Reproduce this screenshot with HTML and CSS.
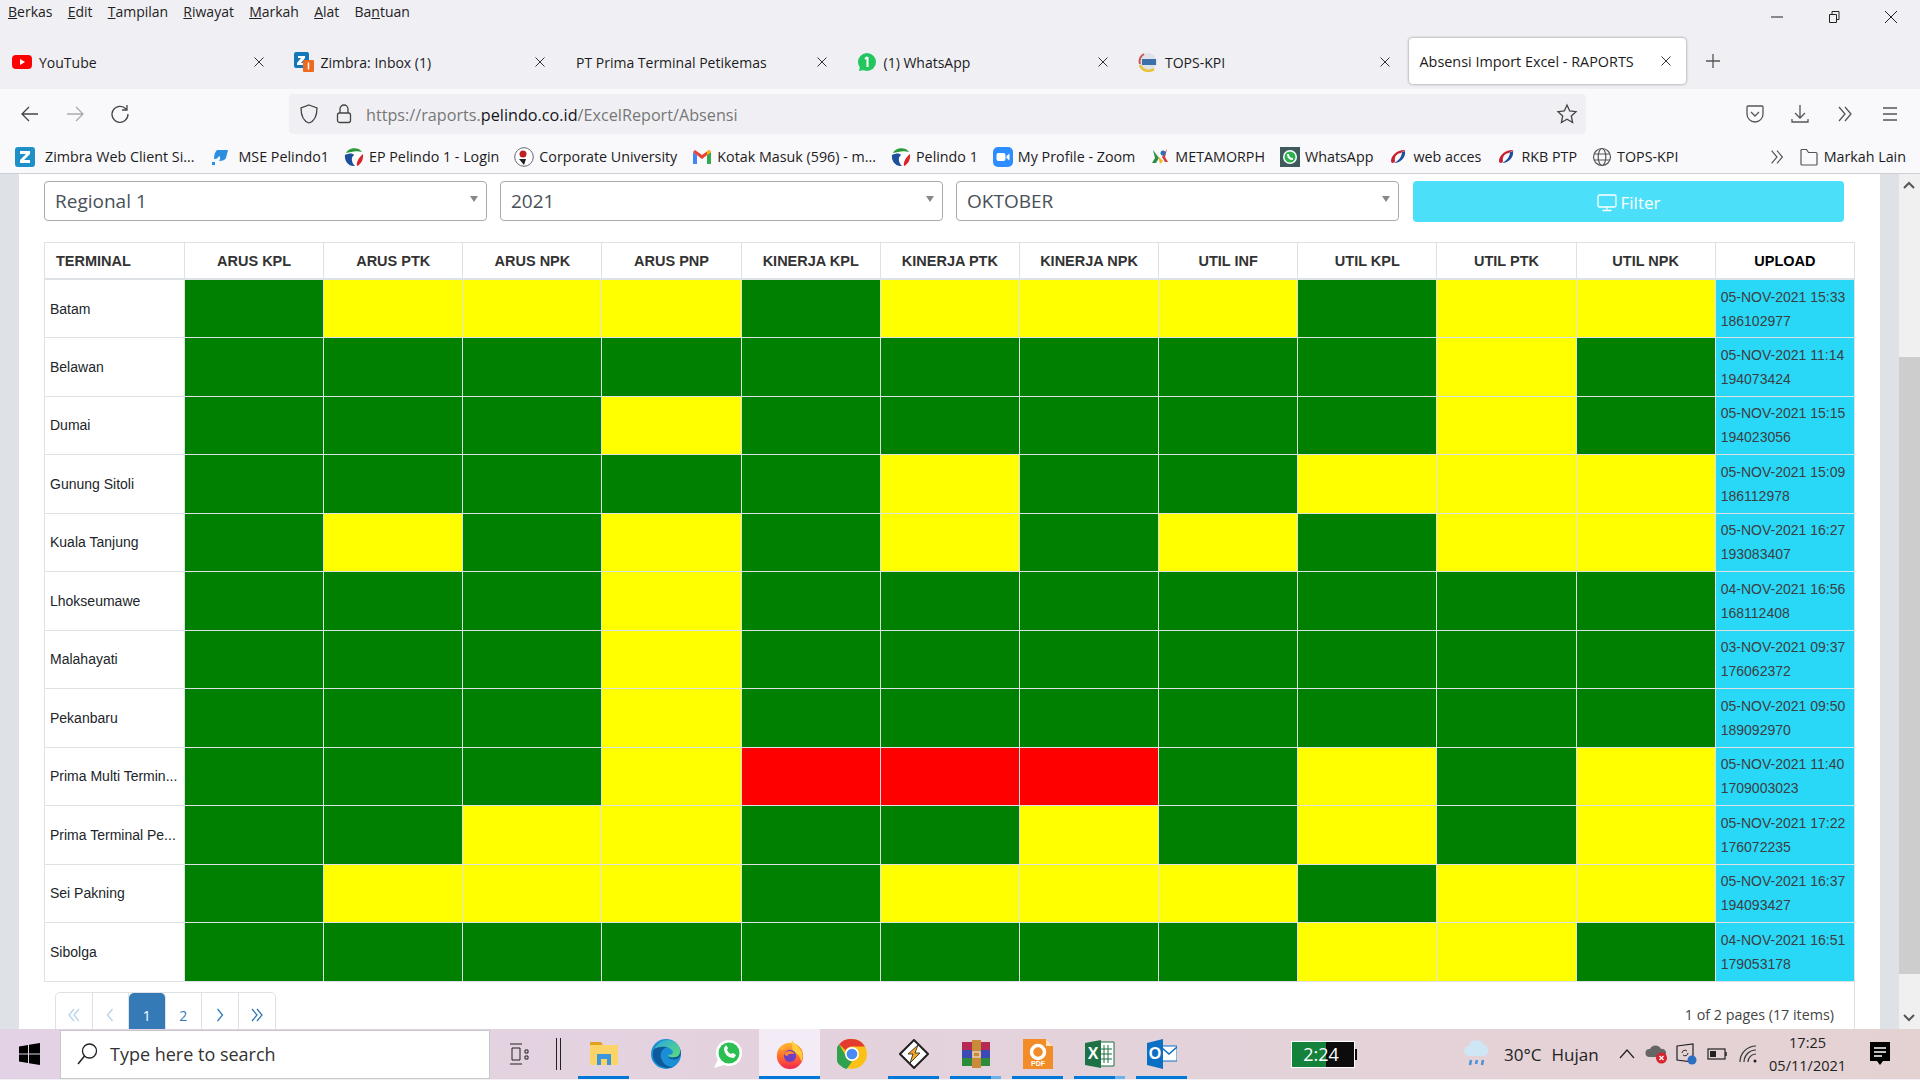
FILE: index.html
```html
<!DOCTYPE html>
<html>
<head>
    <title>Absensi Import Excel - RAPORTS</title>
    <link rel="stylesheet" href="styles.css">
</head>
<body>
<svg class="defs" width="0" height="0">
    <defs>
        <linearGradient id="foxring" x1="0" y1="0" x2="0" y2="1"><stop offset="0" stop-color="#ffb52e"/><stop offset=".55" stop-color="#ff6a2c"/><stop offset="1" stop-color="#f0264f"/></linearGradient>
        <linearGradient id="edgetop" x1="0" y1="0" x2="1" y2="1"><stop offset="0" stop-color="#2aa8de"/><stop offset="1" stop-color="#5fdc78"/></linearGradient>
    </defs>
    <symbol id="x" viewBox="0 0 12 12"><path d="M1.5 1.5l9 9M10.5 1.5l-9 9" stroke="#333" stroke-width="1" fill="none"/></symbol>
    <symbol id="pelindo" viewBox="0 0 20 20"><circle cx="10" cy="10" r="9.5" fill="#fff"/><path d="M2 6C4 1 14-1 18 5 12 3 7 5 2 6z" fill="#2a9a3c"/><path d="M1 8c4-2 8-2 9 0-3 2-3 7 1 11C5 20 0 14 1 8z" fill="#1c4f9c"/><path d="M19 7c1 6-3 11-6 12-1-3 1-8 6-12z" fill="#d8262c"/></symbol>
    <symbol id="swirl" viewBox="0 0 20 20"><path d="M3 14C3 8 10 2 18 3c-3 1-4 2-5 3C9 6 6 10 7 14c0 2-4 3-4 0z" fill="#c8202c"/><path d="M17 4c1 6-4 12-11 12 4-2 8-6 8-11z" fill="#1c4f9c"/></symbol>
</svg>

<div class="menubar">
    <div class="menus">
        <span><u>B</u>erkas</span><span><u>E</u>dit</span><span><u>T</u>ampilan</span><span><u>R</u>iwayat</span><span><u>M</u>arkah</span><span><u>A</u>lat</span><span>Ba<u>n</u>tuan</span>
    </div>
    <div class="winbtns">
        <svg width="14" height="14" viewBox="0 0 14 14"><path d="M1 7h12" stroke="#222"/></svg>
        <svg width="14" height="14" viewBox="0 0 14 14"><path d="M2.5 4.5h7v8h-7zM5 4.5V1.500h7v8h-2.500" stroke="#222" fill="none"/></svg>
        <svg width="14" height="14" viewBox="0 0 14 14"><path d="M1 1l12 12M13 1L1 13" stroke="#222" fill="none"/></svg>
    </div>
</div>

<div class="tabstrip">
    <div class="tab">
        <svg class="fav" viewBox="0 0 20 20"><rect y="3" width="20" height="14" rx="4" fill="#f00"/><path d="M8 7l5 3-5 3z" fill="#fff"/></svg>
        <span class="tabtext">YouTube</span><svg class="close"><use href="#x"/></svg>
    </div>
    <div class="tab">
        <svg class="fav" viewBox="0 0 20 20"><rect width="15" height="16" rx="2" fill="#1477b8"/><path d="M4 4h7v2l-4 5h4v2H3v-2l4-5H4z" fill="#fff"/><rect x="9" y="8" width="11" height="12" rx="1" fill="#ee6a1f"/><path d="M14.500 10.500v7" stroke="#fff" stroke-width="1.500"/></svg>
        <span class="tabtext">Zimbra: Inbox (1)</span><svg class="close"><use href="#x"/></svg>
    </div>
    <div class="tab notfav">
        <span class="tabtext">PT Prima Terminal Petikemas</span><svg class="close"><use href="#x"/></svg>
    </div>
    <div class="tab">
        <svg class="fav" viewBox="0 0 20 20"><circle cx="10" cy="10" r="9" fill="#22c55e"/><path d="M3 14l-1 5 5-1z" fill="#22c55e"/><path d="M10.500 5v10M8 7l2.500-2" stroke="#fff" stroke-width="2" fill="none"/></svg>
        <span class="tabtext">(1) WhatsApp</span><svg class="close"><use href="#x"/></svg>
    </div>
    <div class="tab">
        <svg class="fav" viewBox="0 0 20 20"><circle cx="10" cy="10" r="9" fill="#dfe3e8"/><path d="M2 13a9 9 0 0 0 14 4" stroke="#e8c23a" stroke-width="2.500" fill="none"/><path d="M6 2a9 9 0 0 0-4 10" stroke="#c55" stroke-width="2" fill="none"/><rect x="4" y="7" width="14" height="6" fill="#3d6fa8"/></svg>
        <span class="tabtext">TOPS-KPI</span><svg class="close"><use href="#x"/></svg>
    </div>
    <div class="tab active">
        <span class="tabtext">Absensi Import Excel - RAPORTS</span><svg class="close"><use href="#x"/></svg>
    </div>
    <svg class="newtab" width="16" height="16" viewBox="0 0 16 16"><path d="M8 1v14M1 8h14" stroke="#555" stroke-width="1.300"/></svg>
</div>

<div class="toolbar">
    <div class="navbtns">
        <svg width="20" height="20" viewBox="0 0 20 20"><path d="M18 10H2M9 3l-7 7 7 7" stroke="#444" stroke-width="1.300" fill="none"/></svg>
        <svg width="20" height="20" viewBox="0 0 20 20"><path d="M2 10h16M11 3l7 7-7 7" stroke="#aaa" stroke-width="1.300" fill="none"/></svg>
        <svg width="20" height="20" viewBox="0 0 20 20"><path d="M16 5a8 8 0 1 0 2 5M17 1v5h-5" stroke="#444" stroke-width="1.300" fill="none"/></svg>
    </div>
    <div class="urlbar">
        <svg width="20" height="22" viewBox="0 0 20 22"><path d="M10 2l8 3c0 8-2 13-8 15C4 18 2 13 2 5z" stroke="#444" stroke-width="1.300" fill="none"/></svg>
        <svg class="lock" width="16" height="20" viewBox="0 0 16 20"><path d="M4 9V5a4 4 0 0 1 8 0v4" stroke="#444" stroke-width="1.300" fill="none"/><rect x="1.500" y="9" width="13" height="9.500" rx="2" stroke="#444" stroke-width="1.300" fill="none"/></svg>
        <span class="url">https://raports.<b>pelindo.co.id</b>/ExcelReport/Absensi</span>
        <svg class="star" width="22" height="22" viewBox="0 0 22 22"><path d="M11 2l2.700 6 6.300.7-4.700 4.300 1.300 6.500L11 16.300 5.400 19.500 6.700 13 2 8.700 8.300 8z" stroke="#444" stroke-width="1.300" fill="none"/></svg>
    </div>
    <div class="toolbtns">
        <svg width="20" height="20" viewBox="0 0 20 20"><path d="M3 2h14a1 1 0 0 1 1 1v7a8 8 0 0 1-16 0V3a1 1 0 0 1 1-1z" stroke="#555" stroke-width="1.300" fill="none"/><path d="M6 8l4 4 4-4" stroke="#555" stroke-width="1.300" fill="none"/></svg>
        <svg width="20" height="20" viewBox="0 0 20 20"><path d="M10 1v13M5 9l5 5 5-5M2 15v3h16v-3" stroke="#555" stroke-width="1.300" fill="none"/></svg>
        <svg width="20" height="20" viewBox="0 0 20 20"><path d="M4 3l6 7-6 7M10 3l6 7-6 7" stroke="#555" stroke-width="1.300" fill="none"/></svg>
        <svg width="20" height="20" viewBox="0 0 20 20"><path d="M3 4h14M3 10h14M3 16h14" stroke="#555" stroke-width="1.300"/></svg>
    </div>
</div>

<div class="bookmarks">
    <div class="bm zim"><svg viewBox="0 0 20 20"><rect width="20" height="20" rx="3" fill="#1f8fc7"/><path d="M5 4h10v3l-6 6h6v3H5v-3l6-6H5z" fill="#fff"/></svg>Zimbra Web Client Si...</div>
    <div class="bm mse"><svg viewBox="0 0 20 20"><path d="M7 3h11l-2 8c-1 2-3 3-7 3 1-1 2-4 0-5-1 2-2 3-5 3 0-4 1-7 3-9z" fill="#2a8fe0"/><rect x="2" y="15" width="3" height="3" fill="#2a8fe0"/></svg>MSE Pelindo1</div>
    <div class="bm"><svg><use href="#pelindo"/></svg>EP Pelindo 1 - Login</div>
    <div class="bm"><svg viewBox="0 0 20 20"><circle cx="10" cy="10" r="9.300" fill="#fff" stroke="#667"/><circle cx="9" cy="7" r="3.500" fill="#b22"/><path d="M5 12l5 6 2-6z" fill="#222"/></svg>Corporate University</div>
    <div class="bm"><svg viewBox="0 0 20 20"><path d="M1 5v12h4V8z" fill="#4285f4"/><path d="M15 8v9h4V5z" fill="#34a853"/><path d="M1 5l9 7 9-7-2-2-7 5-7-5z" fill="#ea4335"/><path d="M15 8l4-3-2-2-2 1.500z" fill="#fbbc04"/></svg>Kotak Masuk (596) - m...</div>
    <div class="bm"><svg><use href="#pelindo"/></svg>Pelindo 1</div>
    <div class="bm"><svg viewBox="0 0 20 20"><rect width="20" height="20" rx="5" fill="#2d8cff"/><rect x="3.500" y="6" width="9" height="8" rx="2" fill="#fff"/><path d="M13.500 9l3-2.500v7l-3-2.500z" fill="#fff"/></svg>My Profile - Zoom</div>
    <div class="bm"><svg viewBox="0 0 20 20"><path d="M3 3l6 8-3 5H2l3-5z" fill="#2c8c4c"/><path d="M17 2l-5 8 3 5h3l-3-5z" fill="#d83a34"/><circle cx="13" cy="6" r="2.500" fill="#2b6fc0"/><path d="M8 9l5 5-3 3z" fill="#e8b72c"/></svg>METAMORPH</div>
    <div class="bm"><svg viewBox="0 0 20 20"><rect width="20" height="20" fill="#3f5a5c"/><circle cx="10" cy="10" r="7" fill="#fff"/><circle cx="10" cy="10" r="5.500" fill="#2bb24c"/><path d="M8 7c0 3 2 5 5 5" stroke="#fff" stroke-width="2" fill="none"/></svg>WhatsApp</div>
    <div class="bm"><svg><use href="#swirl"/></svg>web acces</div>
    <div class="bm"><svg><use href="#swirl"/></svg>RKB PTP</div>
    <div class="bm"><svg viewBox="0 0 20 20"><circle cx="10" cy="10" r="8.500" fill="none" stroke="#555" stroke-width="1.200"/><ellipse cx="10" cy="10" rx="3.800" ry="8.500" fill="none" stroke="#555" stroke-width="1.200"/><path d="M2 7h16M2 13h16" stroke="#555" stroke-width="1.200"/></svg>TOPS-KPI</div>
    <svg class="bmmore" width="18" height="18" viewBox="0 0 20 20"><path d="M4 3l6 7-6 7M10 3l6 7-6 7" stroke="#555" stroke-width="1.300" fill="none"/></svg>
    <div class="bm last"><svg viewBox="0 0 20 20"><path d="M2 17V3.500a1 1 0 0 1 1-1h4.500l2 3H17a1 1 0 0 1 1 1V17a1 1 0 0 1-1 1H3a1 1 0 0 1-1-1z" fill="none" stroke="#555" stroke-width="1.200"/></svg>Markah Lain</div>
</div>

<div class="viewport">
    <div class="gutter"></div>
    <div class="page">
        <div class="filters">
            <div class="select">Regional 1</div>
            <div class="select">2021</div>
            <div class="select">OKTOBER</div>
            <button class="filterbtn">
                <svg width="20" height="18" viewBox="0 0 20 18"><rect x="1" y="1" width="18" height="12" rx="1.500" fill="none" stroke="#fff" stroke-width="1.300"/><path d="M10 13v3M5.500 16.500h9" stroke="#fff" stroke-width="1.300"/></svg>
                Filter
            </button>
        </div>
        <div class="gridbox">
            <table class="grid">
                <thead id="head"></thead>
                <tbody id="rows"></tbody>
            </table>
            <div class="pager">
                <div class="pages">
                    <span class="pg faded"><svg width="14" height="14" viewBox="0 0 14 14"><path d="M7 1L2 7l5 6M12 1L7 7l5 6" fill="none" stroke="currentColor" stroke-width="1.300"/></svg></span>
                    <span class="pg faded"><svg width="14" height="14" viewBox="0 0 14 14"><path d="M9.500 1L4.500 7l5 6" fill="none" stroke="currentColor" stroke-width="1.300"/></svg></span>
                    <span class="pg on">1</span>
                    <span class="pg">2</span>
                    <span class="pg"><svg width="14" height="14" viewBox="0 0 14 14"><path d="M4.500 1l5 6-5 6" fill="none" stroke="currentColor" stroke-width="1.300"/></svg></span>
                    <span class="pg"><svg width="14" height="14" viewBox="0 0 14 14"><path d="M2 1l5 6-5 6M7 1l5 6-5 6" fill="none" stroke="currentColor" stroke-width="1.300"/></svg></span>
                </div>
                <span class="pageinfo">1 of 2 pages (17 items)</span>
            </div>
        </div>
    </div>
    <div class="gutter"></div>
    <div class="scrollbar">
        <svg class="up" width="14" height="10" viewBox="0 0 14 10"><path d="M2 8l5-5 5 5" stroke="#555" stroke-width="2" fill="none"/></svg>
        <div class="thumb"></div>
        <svg class="down" width="14" height="10" viewBox="0 0 14 10"><path d="M2 2l5 5 5-5" stroke="#555" stroke-width="2" fill="none"/></svg>
    </div>
</div>

<div class="taskbar">
    <svg class="winlogo" width="21" height="22" viewBox="0 0 21 22"><path d="M0 3.500l9-1.500v8.500H0zM10 1.800L21 0v10.500H10zM0 11.500h9V20l-9-1.500zM10 11.500h11V22l-11-1.800z" fill="#000"/></svg>
    <div class="searchbox">
        <svg width="24" height="24" viewBox="0 0 24 24"><circle cx="14.500" cy="9" r="7" fill="none" stroke="#222" stroke-width="1.300"/><path d="M9.500 14L3 22" stroke="#222" stroke-width="1.500"/></svg>
        <span>Type here to search</span>
    </div>
    <svg class="taskview" width="20" height="24" viewBox="0 0 20 24"><path d="M1 2h12M1 22h12M3 6h8v12H3zM16 8h3v3h-3zM16 14h3v3h-3z" stroke="#222" fill="none"/></svg>
    <div class="sep"></div>
    <div class="apps">
        <div class="app run"><svg viewBox="0 0 30 26"><path d="M1 1h11l2 3h-13z" fill="#e0a020"/><path d="M1 4h28v20H1z" fill="#fbd468"/><path d="M8 24V13h14v11h-4v-6h-6v6z" fill="#3a96dd"/></svg></div>
        <div class="app"><svg viewBox="0 0 30 30"><circle cx="15" cy="15" r="15" fill="#1b8fd6"/><path d="M3 10C6 1 22-2 29 10c2 5 0 9-3 10-3 1-8 0-9-2 5 0 7-2 7-4 0-5-6-7-10-5-4 2-5 7-4 10 2 6 6 9 12 9C10 32-2 22 3 10z" fill="#0c5a9c"/><path d="M3 10C8-1 25-3 29 10c1 5-2 8-5 8-3 1-7 0-7-2 3 0 5-1 5-3-2-5-11-7-19-3z" fill="url(#edgetop)"/></svg></div>
        <div class="app"><svg viewBox="0 0 30 30"><circle cx="16" cy="14" r="13" fill="#fff"/><path d="M1 29l4-9 6 6z" fill="#fff"/><circle cx="16" cy="14" r="10.500" fill="#2bbf52"/><path d="M11 9c0 6 4 10 10 10l2-3-3-2-2 1c-2-1-3-2-4-4l1-2-2-3z" fill="#fff"/></svg></div>
        <div class="app on run"><svg viewBox="0 0 30 32"><circle cx="15" cy="18" r="14" fill="url(#foxring)"/><path d="M17 1c2 4 8 7 11 14 1 4 0 7-1 9-1-5-4-9-9-11-1-4-1-8-1-12z" fill="#ffcf3a"/><path d="M4 11c1-2 3-4 5-5-1 2 0 3 2 3-3 2-5 4-7 2z" fill="#ffb02e"/><circle cx="15" cy="18" r="6.500" fill="#6f3fc4"/><path d="M9 15c3-3 9-3 11 1-4-1-7 0-8 2-2 0-3-1-3-3z" fill="#ff8a2c"/></svg></div>
        <div class="app"><svg viewBox="0 0 28 28"><circle cx="14" cy="14" r="14" fill="#fbc116"/><path d="M14 0a14 14 0 0 1 12.100 7H14a7 7 0 0 0-6.100 3.500L2 5A14 14 0 0 1 14 0z" fill="#e33b2e"/><path d="M2 5l6 10.500A7 7 0 0 0 14 21l-5 7A14 14 0 0 1 2 5z" fill="#2fa24f"/><circle cx="14" cy="14" r="6.500" fill="#fff"/><circle cx="14" cy="14" r="5" fill="#4a8af4"/></svg></div>
        <div class="app run"><svg viewBox="0 0 30 30"><path d="M15 1l14 14-14 14L1 15z" fill="#fff" stroke="#222" stroke-width="2"/><path d="M19 6L9 15h5l-3 9 10-10h-5z" fill="#f5a623" stroke="#222" stroke-width=".8"/></svg></div>
        <div class="app run more"><svg viewBox="0 0 30 30"><rect x="1" y="3" width="28" height="8" fill="#b42a55"/><rect x="1" y="11" width="28" height="8" fill="#3d4ab5"/><rect x="1" y="19" width="28" height="8" fill="#2c8c3c"/><path d="M11 1h9v28h-9z" fill="#c98a3a"/><rect x="12" y="13" width="7" height="5" fill="none" stroke="#eee"/></svg></div>
        <div class="app run"><svg viewBox="0 0 30 30"><path d="M0 0h23l7 7v23H0z" fill="#f28c28"/><path d="M23 0l7 7h-7z" fill="#fde3c4"/><circle cx="15" cy="13" r="6.500" fill="none" stroke="#fff" stroke-width="3.500"/><text x="15" y="27" class="pdf">PDF</text></svg></div>
        <div class="app run more"><svg viewBox="0 0 30 30"><path d="M10 3h19v24H10z" fill="#fff" stroke="#1e7145"/><path d="M19 6v18M23 6v18M13 10h14M13 15h14M13 20h14" stroke="#1e7145"/><path d="M0 4l16-3v28L0 26z" fill="#1e7145"/><text x="8" y="20" class="xl">X</text></svg></div>
        <div class="app run"><svg viewBox="0 0 30 30"><path d="M14 7h16v15H14z" fill="#fff" stroke="#0b6fc4"/><path d="M14 8l8 7 8-7" fill="none" stroke="#0b6fc4" stroke-width="1.500"/><path d="M0 4l16-4v30L0 26z" fill="#0b6fc4"/><text x="8" y="20" class="xl">O</text></svg></div>
    </div>
    <div class="batwidget"><span class="batfill"></span><span class="battext">2:24</span></div>
    <div class="tray">
        <svg class="rain" width="28" height="32" viewBox="0 0 28 32"><path d="M6 18a5 5 0 0 1 0-10 8 8 0 0 1 15-1 6 6 0 0 1 1 11z" fill="#cfe6f7"/><path d="M8 22l-1 5M14 22l-1 4M20 22l-1 5" stroke="#4a93d6" stroke-width="2.500"/></svg>
        <span class="temp">30°C</span><span class="hujan">Hujan</span>
        <svg class="chev" width="16" height="12" viewBox="0 0 16 12"><path d="M1 10l7-8 7 8" stroke="#222" stroke-width="1.200" fill="none"/></svg>
        <svg class="trayic" width="24" height="24" viewBox="0 0 24 24"><path d="M4 15a4 4 0 0 1 1-8 6 6 0 0 1 11 0 4 4 0 0 1 2 8z" fill="#666"/><circle cx="16.500" cy="16" r="5.500" fill="#d9232e"/><path d="M14.500 14l4 4M18.500 14l-4 4" stroke="#fff" stroke-width="1.300"/></svg>
        <svg class="trayic" width="24" height="24" viewBox="0 0 24 24"><path d="M2 4l16-2v18L2 18z" fill="none" stroke="#222" stroke-width="1.200"/><path d="M7 11a3 3 0 0 1 5-2M13 11a3 3 0 0 1-5 2" stroke="#222" fill="none"/><circle cx="17" cy="18" r="4.500" fill="#2a6fc0"/></svg>
        <svg class="trayic" width="24" height="24" viewBox="0 0 24 24"><rect x="3" y="7" width="17" height="10" fill="none" stroke="#222" stroke-width="1.200"/><rect x="5" y="9" width="6" height="6" fill="#222"/><path d="M21 10v4" stroke="#222" stroke-width="1.500"/></svg>
        <svg class="trayic wifi" width="24" height="24" viewBox="0 0 24 24"><path d="M3 20A16 16 0 0 1 19 4M7 20A12 12 0 0 1 19 8M11 20a8 8 0 0 1 8-8" stroke="#333" stroke-width="1.200" fill="none"/><circle cx="18" cy="19" r="1.500" fill="#222"/></svg>
        <div class="clock"><span>17:25</span><span>05/11/2021</span></div>
        <svg class="notif" width="20" height="24" viewBox="0 0 20 24"><path d="M0 0h20v19h-7l-3 4-3-4H0z" fill="#000"/><path d="M4 6h12M4 10h12M4 14h8" stroke="#fff" stroke-width="1.300"/></svg>
    </div>
</div>

<script>
    // g = green, y = yellow, r = red
    var cols = ["ARUS KPL","ARUS PTK","ARUS NPK","ARUS PNP","KINERJA KPL","KINERJA PTK","KINERJA NPK","UTIL INF","UTIL KPL","UTIL PTK","UTIL NPK"];
    var data = [
        ["Batam","gyyygyyygyy","05-NOV-2021 15:33","186102977"],
        ["Belawan","gggggggggyg","05-NOV-2021 11:14","194073424"],
        ["Dumai","gggygggggyg","05-NOV-2021 15:15","194023056"],
        ["Gunung Sitoli","gggggyggyyy","05-NOV-2021 15:09","186112978"],
        ["Kuala Tanjung","gygygygygyy","05-NOV-2021 16:27","193083407"],
        ["Lhokseumawe","gggyggggggg","04-NOV-2021 16:56","168112408"],
        ["Malahayati","gggyggggggg","03-NOV-2021 09:37","176062372"],
        ["Pekanbaru","gggyggggggg","05-NOV-2021 09:50","189092970"],
        ["Prima Multi Termin...","gggyrrrgygy","05-NOV-2021 11:40","1709003023"],
        ["Prima Terminal Pe...","ggyyggygygy","05-NOV-2021 17:22","176072235"],
        ["Sei Pakning","gyyygyyygyy","05-NOV-2021 16:37","194093427"],
        ["Sibolga","ggggggggyyg","04-NOV-2021 16:51","179053178"]
    ];

    var h = '<tr><th class="first">TERMINAL</th>';
    for (var i = 0; i < cols.length; i++) {
        h += '<th>' + cols[i] + '</th>';
    }
    h += '<th class="upl">UPLOAD</th></tr>';
    document.getElementById("head").innerHTML = h;

    var b = '';
    for (var r = 0; r < data.length; r++) {
        b += '<tr><td class="name">' + data[r][0] + '</td>';
        for (var c = 0; c < data[r][1].length; c++) {
            b += '<td class="' + data[r][1][c] + '"></td>';
        }
        b += '<td class="upload">' + data[r][2] + '<br>' + data[r][3] + '</td></tr>';
    }
    document.getElementById("rows").innerHTML = b;
</script>
</body>
</html>
```
FILE: styles.css
```css
html, body {
    margin: 0;
    padding: 0;
    height: 100%;
    overflow: hidden;
}
body {
    width: 1920px;
    height: 1080px;
    display: flex;
    flex-direction: column;
    font-family: "Open Sans", "Noto Sans", sans-serif;
    font-size: 14px;
    color: #1c1b22;
    background-color: #f0f0f4;
}
.defs {
    position: absolute;
}

/* browser window */
.menubar {
    height: 38px;
    flex: none;
    display: flex;
    justify-content: space-between;
    background-color: #f0f0f4;
}
.menus {
    display: flex;
    gap: 15.200px;
    padding: 3px 0 0 8px;
    font-size: 14px;
    line-height: 18px;
    color: #222;
}
.winbtns {
    display: flex;
    gap: 43px;
    padding: 10px 22px 0 0;
}
.tabstrip {
    height: 51px;
    flex: none;
    display: flex;
    align-items: flex-start;
    padding-left: 9px;
    background-color: #f0f0f4;
}
.tab {
    width: 281.500px;
    height: 48px;
    flex: none;
    box-sizing: border-box;
    display: flex;
    align-items: center;
    padding: 0 3px;
}
.tab.notfav {
    padding-left: 4px;
}
.tab .fav {
    width: 20px;
    height: 20px;
    margin-right: 7px;
}
.tabtext {
    flex: 1;
    font-size: 14px;
    white-space: nowrap;
}
.tab .close {
    width: 12px;
    height: 12px;
    margin-right: 23px;
}
.tab.active {
    width: 277px;
    height: 46px;
    margin-left: -8px;
    padding: 0 14px 0 11px;
    background-color: #fff;
    border-radius: 4px;
    box-shadow: 0 0 3px rgba(0,0,0,.45);
}
.tab.active .tabtext {
    font-size: 14.400px;
}
.tab.active .close {
    margin-right: 0;
}
.newtab {
    margin: 15px 0 0 19px;
}
.toolbar {
    height: 47px;
    flex: none;
    box-sizing: border-box;
    display: flex;
    align-items: center;
    padding-top: 3px;
    background-color: #f9f9fb;
}
.navbtns {
    width: 289px;
    flex: none;
    box-sizing: border-box;
    display: flex;
    gap: 25px;
    padding-left: 20px;
}
.urlbar {
    width: 1297px;
    height: 40px;
    flex: none;
    box-sizing: border-box;
    display: flex;
    align-items: center;
    padding: 0 8px 0 10px;
    background-color: #f0f0f4;
    border-radius: 4px;
}
.urlbar .lock {
    margin-left: 17px;
}
.url {
    flex: 1;
    margin-left: 14px;
    padding-top: 2px;
    font-size: 16.200px;
    color: #777;
}
.url b {
    font-weight: 400;
    color: #15141a;
}
.toolbtns {
    display: flex;
    gap: 25px;
    margin-left: 159px;
}
.bookmarks {
    height: 38px;
    flex: none;
    box-sizing: border-box;
    display: flex;
    align-items: center;
    padding: 4px 0 0 15px;
    background-color: #f9f9fb;
    border-bottom: 1px solid #cfcfd8;
    white-space: nowrap;
    font-size: 14.300px;
    gap: 15px;
}
.bm {
    display: flex;
    align-items: center;
    gap: 5px;
}
.bm.zim {
    gap: 10px;
}
.bm.mse {
    gap: 9px;
}
.bm svg {
    width: 20px;
    height: 20px;
    flex: none;
}
.bmmore {
    margin-left: auto;
}
.bm.last {
    margin-right: 14px;
    margin-left: -2px;
}

/* page */
.viewport {
    height: 855px;
    flex: none;
    display: flex;
    background-color: #fff;
}
.gutter {
    width: 19px;
    flex: none;
    background-color: #dee2e6;
}
.page {
    width: 1861px;
    flex: none;
    box-sizing: border-box;
    padding: 7px 0 0 25px;
    overflow: hidden;
    background-color: #fff;
}
.scrollbar {
    position: relative;
    width: 21px;
    flex: none;
    background-color: #f0f0f0;
}
.scrollbar .up {
    position: absolute;
    top: 6px;
    left: 3px;
}
.scrollbar .down {
    position: absolute;
    bottom: 6px;
    left: 3px;
}
.thumb {
    position: absolute;
    top: 183px;
    left: 0;
    width: 21px;
    height: 617px;
    background-color: #cdcdcd;
}
.filters {
    display: flex;
    width: 1810px;
    gap: 13px;
    margin-bottom: 20px;
}
.select {
    position: relative;
    width: 443px;
    height: 40px;
    flex: none;
    box-sizing: border-box;
    padding: 0 10px;
    border: 1px solid #aaa;
    border-radius: 4px;
    font-size: 19px;
    line-height: 38px;
    color: #495057;
}
.select::after {
    content: "";
    position: absolute;
    right: 8px;
    top: 14px;
    border-left: 4.500px solid transparent;
    border-right: 4.500px solid transparent;
    border-top: 6px solid #888;
}
.filterbtn {
    width: 431px;
    height: 41px;
    flex: none;
    margin-left: 1px;
    padding: 2px 0 0;
    border: none;
    border-radius: 4px;
    background-color: #4cdff9;
    color: #fff;
    font-family: inherit;
    font-size: 17px;
    display: flex;
    align-items: center;
    justify-content: center;
    gap: 4px;
}
.gridbox {
    width: 1811px;
    height: 800px;
    box-sizing: border-box;
    border-right: 1px solid #dee2e6;
}
.grid {
    width: 1811px;
    table-layout: fixed;
    border-collapse: collapse;
    font-family: "Liberation Sans", Arial, sans-serif;
    font-size: 14px;
    color: #212529;
}
.grid th {
    height: 35px;
    padding: 0;
    border: 1px solid #dee2e6;
    border-bottom: 2px solid #dee2e6;
    font-size: 14.500px;
    font-weight: 700;
    color: #333;
    text-align: center;
}
.grid th.first {
    width: 140px;
    box-sizing: border-box;
    text-align: left;
    padding-left: 11px;
}
.grid th.upl {
    color: #000;
}
.grid td {
    height: 58.500px;
    box-sizing: border-box;
    padding: 0;
    border: 1px solid #dee2e6;
}
.grid td.name {
    padding-left: 5px;
    white-space: nowrap;
    background-color: #fff;
}
.grid td.g {
    background-color: #008000;
}
.grid td.y {
    background-color: #ffff00;
}
.grid td.r {
    background-color: #ff0000;
}
.grid td.upload {
    padding-left: 5px;
    background-color: #29d8f6;
    line-height: 24px;
    color: #3a3f44;
    white-space: nowrap;
}
.pager {
    display: flex;
    justify-content: space-between;
    padding: 10px 20px 0 11px;
}
.pages {
    display: flex;
    height: 60px;
    border: 1px solid #dee2e6;
    border-radius: 5px 5px 0 0;
}
.pg {
    width: 36.500px;
    box-sizing: border-box;
    padding-top: 13px;
    text-align: center;
    font-size: 14px;
    color: #337ab7;
    border-right: 1px solid #dee2e6;
}
.pg:last-child {
    border-right: none;
}
.pg svg {
    display: inline-block;
    margin-top: 2px;
}
.pg.faded {
    color: #b7d2e8;
}
.pg.on {
    background-color: #337ab7;
    color: #fff;
    border-radius: 5px 5px 0 0;
}
.pageinfo {
    padding-top: 13px;
    font-size: 14.300px;
    color: #444;
}

/* taskbar */
.taskbar {
    position: relative;
    height: 50px;
    flex: none;
    display: flex;
    align-items: center;
    background: linear-gradient(90deg, #e3d2e5, #e4d2d3);
}
.winlogo {
    margin-left: 19px;
    margin-right: 20px;
}
.searchbox {
    width: 430px;
    height: 49px;
    flex: none;
    box-sizing: border-box;
    display: flex;
    align-items: center;
    padding-left: 14px;
    gap: 11px;
    background-color: #fff;
    border: 1px solid #c8c8c8;
    font-size: 18px;
    color: #333;
}
.taskview {
    margin-left: 19px;
}
.sep {
    width: 3px;
    height: 32px;
    margin-left: 27px;
    border-left: 1px solid #222;
    border-right: 1px solid #222;
}
.apps {
    display: flex;
    height: 50px;
    margin-left: 17px;
}
.app {
    position: relative;
    width: 51px;
    height: 50px;
    margin-right: 11px;
    display: flex;
    align-items: center;
    justify-content: center;
}
.app svg {
    width: 30px;
    height: 30px;
}
.app.on {
    width: 61px;
    margin: 0 6px 0 -5px;
    background-color: #f3ebf5;
}
.app.run::after {
    content: "";
    position: absolute;
    left: 0;
    right: 0;
    bottom: 0;
    height: 3px;
    background-color: #0078d7;
}
.app.more::before {
    content: "";
    position: absolute;
    z-index: 1;
    right: 0;
    bottom: 0;
    width: 10px;
    height: 3px;
    background-color: #6cb1ea;
}
.pdf {
    font: 700 7px "Liberation Sans", sans-serif;
    fill: #fff;
    text-anchor: middle;
}
.xl {
    font: 700 16px "Liberation Sans", sans-serif;
    fill: #fff;
    text-anchor: middle;
}
.batwidget {
    position: absolute;
    left: 1291px;
    top: 12px;
    width: 64px;
    height: 27px;
    box-sizing: border-box;
    border: 1px solid #fff;
    background-color: #0c0c0c;
    color: #fff;
    text-align: center;
    font-size: 18px;
    line-height: 25px;
}
.batwidget::after {
    content: "";
    position: absolute;
    right: -3px;
    top: 7px;
    width: 2px;
    height: 11px;
    background-color: #0c0c0c;
}
.batfill {
    position: absolute;
    left: 0;
    top: 0;
    bottom: 0;
    width: 34px;
    background-color: #14823a;
}
.battext {
    position: relative;
    margin-left: -4px;
}
.tray {
    position: absolute;
    left: 1463px;
    top: 0;
    right: 0;
    height: 50px;
    display: flex;
    align-items: center;
    color: #222;
}
.temp {
    margin-left: 13px;
    font-size: 17px;
}
.hujan {
    margin-left: 10px;
    font-size: 17px;
}
.chev {
    margin-left: 20px;
}
.trayic {
    flex: none;
    margin-left: 6px;
}
.chev + .trayic {
    margin-left: 10px;
}
.trayic.wifi {
    margin-left: 8px;
}
.clock {
    width: 84px;
    margin-left: 5px;
    display: flex;
    flex-direction: column;
    align-items: center;
    gap: 3px;
    font-size: 14.500px;
    line-height: 20px;
}
.notif {
    margin-left: 20px;
}
```
